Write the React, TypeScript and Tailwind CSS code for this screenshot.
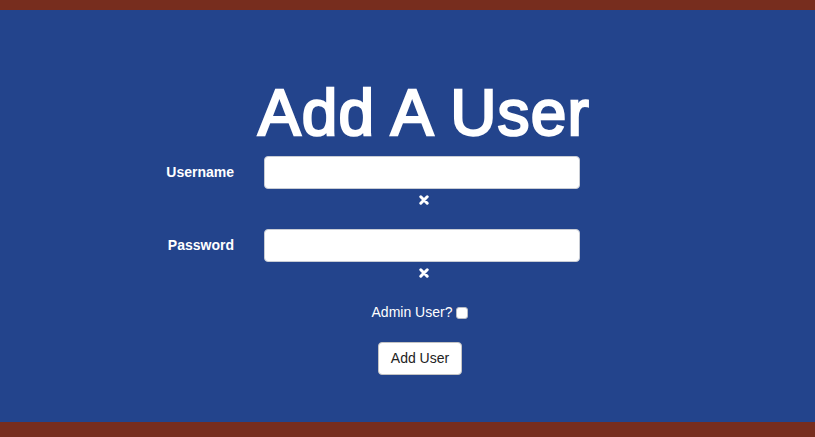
import React from "react";

function Cross() {
  return (
    <svg width="10" height="10" viewBox="0 0 10 10" aria-hidden="true">
      <path d="M1.8 1.8 L8.2 8.2 M8.2 1.8 L1.8 8.2" stroke="#ffffff" strokeWidth="3" strokeLinecap="round" fill="none" />
    </svg>
  );
}

export default function App() {
  return (
    <div className="w-[815px] h-[437px] flex flex-col overflow-hidden" style={{ fontFamily: '"Liberation Sans", Arial, Helvetica, sans-serif' }}>
      <div className="h-[10px] bg-[#772d1e]" />
      <div className="h-[412px] bg-[#23448c] pt-[71px]">
        <div className="grid grid-cols-[234px_316px] gap-x-[30px]">
          <div />
          <h1 className="justify-self-center whitespace-nowrap text-white text-[64px] leading-none font-normal h-[64px] tracking-[1.2px] [-webkit-text-stroke:2.4px_white] pl-[4px]">
            Add A User
          </h1>

          <label className="text-right text-white font-bold text-[14px] self-center mt-[11px]">Username</label>
          <input
            type="text"
            className="mt-[11px] h-[33px] w-[316px] bg-white rounded-[4px] border border-[#c8ccd4] outline-none"
          />
          <div />
          <div className="flex justify-center pl-[4px] mt-[6px] h-[10px]">
            <Cross />
          </div>

          <label className="text-right text-white font-bold text-[14px] self-center mt-[24px]">Password</label>
          <input
            type="password"
            className="mt-[24px] h-[33px] w-[316px] bg-white rounded-[4px] border border-[#c8ccd4] outline-none"
          />
          <div />
          <div className="flex justify-center pl-[4px] mt-[6px] h-[10px]">
            <Cross />
          </div>

          <div />
          <div className="flex justify-center items-center pr-[4px] mt-[24px] h-[20px] text-white text-[14px]">
            <span>Admin User?</span>
            <span className="ml-[4px] mt-[2px] inline-block w-[12px] h-[12px] bg-white rounded-[3px] border border-[#b8bcc4]" />
          </div>

          <div />
          <div className="flex justify-center pr-[4px] mt-[20px]">
            <button className="h-[33px] w-[84px] bg-white rounded-[4px] border border-[#c4c4c4] text-[14px] text-[#222]">
              Add User
            </button>
          </div>
        </div>
      </div>
      <div className="h-[15px] bg-[#772d1e]" />
    </div>
  );
}
